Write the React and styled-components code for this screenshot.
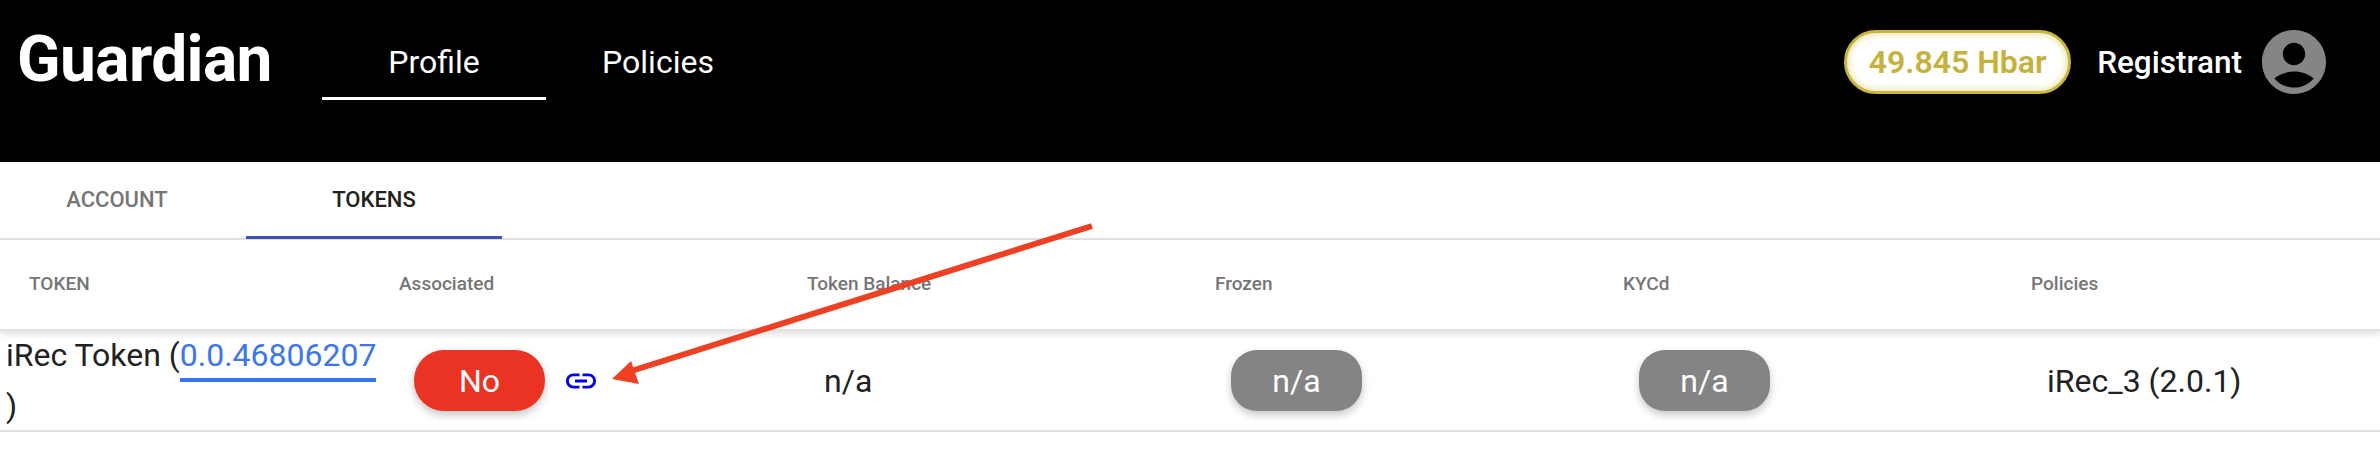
import React from 'react';
import styled, { createGlobalStyle } from 'styled-components';

const GlobalStyle = createGlobalStyle`
    html, body {
        margin: 0;
        padding: 0;
        background: #FFF;
    }
    body {
        font-family: Roboto, "Liberation Sans", sans-serif;
    }
`;

const Page = styled.div`
    position: relative;
    width: 2380px;
    height: 454px;
    overflow: hidden;
    background: #FFF;
`;

const Header = styled.header`
    display: flex;
    align-items: center;
    box-sizing: border-box;
    height: 162px;
    padding: 24px 54px 62px 17px;
    background: #000;
    color: #FFF;
`;

const Brand = styled.div`
    width: 305px;
    font-size: 64px;
    font-weight: 700;
    letter-spacing: -0.6px;
    line-height: 72px;
    margin-top: -4px;
`;

const Nav = styled.nav`
    display: flex;
    height: 100%;
`;

const NavTab = styled.div`
    display: flex;
    align-items: center;
    justify-content: center;
    box-sizing: border-box;
    width: 224px;
    padding-top: 2px;
    font-size: 32px;
    border-bottom: 3px solid ${props => (props.$active ? '#FFF' : 'transparent')};
`;

const UserArea = styled.div`
    display: flex;
    align-items: center;
    margin-left: auto;
`;

const Balance = styled.div`
    display: flex;
    align-items: center;
    justify-content: center;
    box-sizing: border-box;
    width: 227px;
    height: 64px;
    border: 3px solid #C8B63F;
    border-radius: 32px;
    background: #FFF;
    box-shadow: inset 0 0 8px #E3D98E;
    color: #C5B23C;
    font-size: 32px;
    font-weight: 600;
`;

const UserName = styled.div`
    margin-left: 26px;
    font-size: 31.5px;
    font-weight: 500;
`;

const Avatar = styled.svg`
    display: block;
    width: 64px;
    height: 64px;
    margin-left: 20px;
    fill: #858585;
`;

const TabBar = styled.div`
    display: flex;
    box-sizing: border-box;
    height: 78px;
    border-bottom: 2px solid #E4E4E4;
`;

const Tab = styled.div`
    display: flex;
    align-items: center;
    justify-content: center;
    box-sizing: border-box;
    width: ${props => props.$width}px;
    height: 77px;
    margin-right: ${props => props.$gap || 0}px;
    font-size: 22px;
    font-weight: 500;
    color: ${props => (props.$active ? '#212121' : '#757575')};
    border-bottom: 3px solid ${props => (props.$active ? '#3F51B5' : 'transparent')};
`;

const HeadRow = styled.div`
    position: relative;
    display: grid;
    grid-template-columns: 370px repeat(4, 408px) 1fr;
    align-items: center;
    box-sizing: border-box;
    height: 91px;
    padding-bottom: 2px;
    border-bottom: 2px solid #E2E2E2;
    box-shadow: 0 3px 7px rgba(0, 0, 0, 0.13);
    background: #FFF;
`;

const HeadCell = styled.div`
    padding-left: 29px;
    font-size: 19px;
    font-weight: 500;
    color: #757575;
`;

const BodyRow = styled.div`
    display: grid;
    grid-template-columns: 370px repeat(4, 408px) 1fr;
    align-items: center;
    height: 99px;
    border-bottom: 2px solid #E2E2E2;
    font-size: 32px;
    color: #212121;
`;

const NameCell = styled.div`
    box-sizing: border-box;
    width: 386px;
    padding-left: 6px;
    line-height: 48px;
`;

const Cell = styled.div`
    display: flex;
    align-items: center;
    padding-left: ${props => props.$inset || 45}px;
`;

const TokenLink = styled.span`
    display: inline-block;
    line-height: 41px;
    padding-bottom: 2px;
    color: #3B76EF;
    border-bottom: 4px solid #3574F0;
`;

const Pill = styled.div`
    display: flex;
    align-items: center;
    justify-content: center;
    width: 131px;
    height: 61px;
    border-radius: ${props => (props.$wide ? 30 : 26)}px;
    background: ${props => props.$color};
    color: #FFF;
    font-size: 32px;
    box-shadow: 0 4px 9px rgba(0, 0, 0, 0.22);
`;

const LinkIcon = styled.svg`
    display: block;
    width: 36px;
    height: 36px;
    margin-left: 18px;
    fill: #0000EE;
`;

const Annotation = styled.svg`
    position: absolute;
    left: 0;
    top: 0;
    width: 2380px;
    height: 454px;
    pointer-events: none;
`;

const columns = ['TOKEN', 'Associated', 'Token Balance', 'Frozen', 'KYCd', 'Policies'];

const App = () => (
    <Page>
        <GlobalStyle />
        <Header>
            <Brand>Guardian</Brand>
            <Nav>
                <NavTab $active>Profile</NavTab>
                <NavTab>Policies</NavTab>
            </Nav>
            <UserArea>
                <Balance>49.845 Hbar</Balance>
                <UserName>Registrant</UserName>
                <Avatar viewBox="2 2 20 20">
                    <path d="M12 2C6.48 2 2 6.48 2 12s4.48 10 10 10 10-4.48 10-10S17.52 2 12 2zm0 4c1.93 0 3.5 1.57 3.5 3.5S13.93 13 12 13s-3.5-1.57-3.5-3.5S10.07 6 12 6zm0 14c-2.03 0-4.43-.82-6.14-2.88C7.55 15.8 9.68 15 12 15s4.45.8 6.14 2.12C16.43 19.18 14.03 20 12 20z" />
                </Avatar>
            </UserArea>
        </Header>
        <TabBar>
            <Tab $width={234} $gap={12}>ACCOUNT</Tab>
            <Tab $width={256} $active>TOKENS</Tab>
        </TabBar>
        <HeadRow>
            {columns.map(name => (
                <HeadCell key={name}>{name}</HeadCell>
            ))}
        </HeadRow>
        <BodyRow>
            <NameCell>
                iRec Token (<TokenLink>0.0.46806207</TokenLink>)
            </NameCell>
            <Cell $inset={44}>
                <Pill $color="#EA3323" $wide>No</Pill>
                <LinkIcon viewBox="0 0 24 24">
                    <path d="M3.9 12c0-1.71 1.39-3.1 3.1-3.1h4V7H7c-2.76 0-5 2.24-5 5s2.24 5 5 5h4v-1.9H7c-1.71 0-3.1-1.39-3.1-3.1zM8 13h8v-2H8v2zm9-6h-4v1.9h4c1.71 0 3.1 1.39 3.1 3.1s-1.39 3.1-3.1 3.1h-4V17h4c2.76 0 5-2.24 5-5s-2.24-5-5-5z" />
                </LinkIcon>
            </Cell>
            <Cell $inset={46}>n/a</Cell>
            <Cell><Pill $color="#848484">n/a</Pill></Cell>
            <Cell><Pill $color="#848484">n/a</Pill></Cell>
            <Cell>iRec_3 (2.0.1)</Cell>
        </BodyRow>
        <Annotation viewBox="0 0 2380 454">
            <line x1="1092" y1="226" x2="628" y2="372" stroke="#EE4023" strokeWidth="6" />
            <polygon points="612,379 631,361 639,384" fill="#EE4023" />
        </Annotation>
    </Page>
);

export default App;
